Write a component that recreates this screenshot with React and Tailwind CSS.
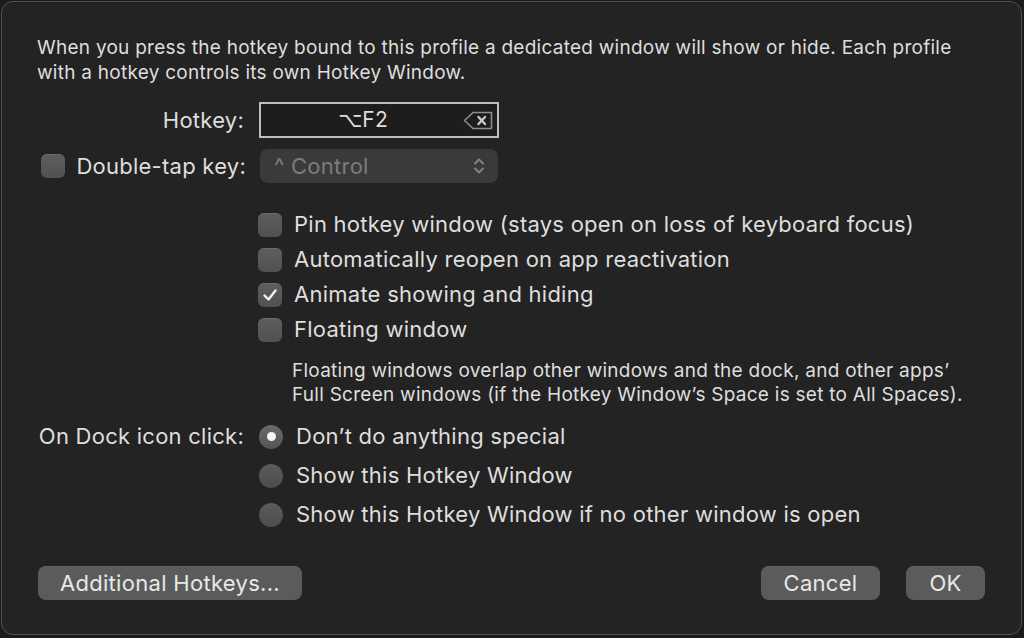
import React from "react";

const FONT = { fontFamily: "Inter, 'Noto Sans', 'DejaVu Sans', sans-serif" };

function Checkbox({ checked }) {
  return (
    <div className="w-[24px] h-[24px] rounded-[6px] bg-gradient-to-b from-[#5e5e5e] to-[#515151] shadow-[inset_0_0.5px_0_rgba(255,255,255,0.15)] flex items-center justify-center shrink-0">
      {checked && (
        <svg width="18" height="18" viewBox="0 0 18 18">
          <path d="M3.5 9.5 L7.5 13.5 L14.5 4.5" fill="none" stroke="#f2f2f2" strokeWidth="2.4" strokeLinecap="round" strokeLinejoin="round" />
        </svg>
      )}
    </div>
  );
}

function Radio({ selected }) {
  return (
    <div className={"w-[24px] h-[24px] rounded-full flex items-center justify-center shrink-0 " + (selected ? "bg-gradient-to-b from-[#6a6a6a] to-[#555555]" : "bg-gradient-to-b from-[#5c5c5c] to-[#4c4c4c]")}>
      {selected && <div className="w-[9px] h-[9px] rounded-full bg-[#f5f5f5]" />}
    </div>
  );
}

function Btn({ children, w }) {
  return (
    <div className={"h-[34px] rounded-[8px] bg-[#5b5b5b] shadow-[inset_0_0.5px_0_rgba(255,255,255,0.12)] flex items-center justify-center text-[22px] tracking-[0.3px] text-[#e8e8e8] " + w}>
      {children}
    </div>
  );
}

export default function App() {
  return (
    <div className="w-[1024px] h-[638px] bg-[#1b1b1b] pl-px pt-px" style={FONT}>
      <div className="w-[1021px] h-[634px] rounded-[12px] border border-[#505050] bg-[#242323] flex flex-col pl-[35px] pr-[36px] pt-[33px] pb-[34px] text-[#dedede]">
        <div className="text-[19px] leading-[25px] tracking-[0.26px]">
          When you press the hotkey bound to this profile a dedicated window will show or hide. Each profile
          <br />
          with a hotkey controls its own Hotkey Window.
        </div>

        {/* Hotkey row */}
        <div className="flex items-center mt-[17px] text-[22px] tracking-[0.25px]">
          <div className="w-[207px] text-right">Hotkey:</div>
          <div className="ml-[15px] w-[240px] h-[36px] border-2 border-[#bdbdbd] bg-[#1d1d1d] relative flex items-center">
            <div className="w-[204px] text-center text-[21px]" style={{ fontFamily: "'DejaVu Sans', Inter, sans-serif" }}>
              <span>⌥</span><span style={FONT}>F2</span>
            </div>
            <svg className="absolute right-[4px] top-[7px]" width="30" height="19" viewBox="0 0 30 19">
              <path d="M10 1.5 H28.5 V17.5 H10 L1.5 9.5 Z" fill="none" stroke="#8e8e8e" strokeWidth="1.6" strokeLinejoin="round" />
              <path d="M15.5 6 L22 13 M22 6 L15.5 13" stroke="#c8c8c8" strokeWidth="2.4" strokeLinecap="round" />
            </svg>
          </div>
        </div>

        {/* Double tap row */}
        <div className="flex items-center mt-[11px] text-[22px] tracking-[0.25px]">
          <div className="w-[209px] flex items-center">
            <div className="ml-[4px]"><Checkbox /></div>
            <div className="ml-auto">Double-tap key:</div>
          </div>
          <div className="ml-[14px] w-[238px] h-[34px] rounded-[8px] bg-[#3a3a3a] flex items-center pl-[14px] pr-[12px] text-[#7c7c7c]">
            <span>^ Control</span>
            <svg className="ml-auto" width="14" height="22" viewBox="0 0 14 22">
              <path d="M3 8.5 L7 4.5 L11 8.5" fill="none" stroke="#808080" strokeWidth="2" strokeLinecap="round" strokeLinejoin="round" />
              <path d="M3 13.5 L7 17.5 L11 13.5" fill="none" stroke="#808080" strokeWidth="2" strokeLinecap="round" strokeLinejoin="round" />
            </svg>
          </div>
        </div>

        {/* Checkboxes */}
        <div className="flex flex-col mt-[24px] ml-[221px] text-[22px] tracking-[0.25px]">
          {[
            ["Pin hotkey window (stays open on loss of keyboard focus)", false],
            ["Automatically reopen on app reactivation", false],
            ["Animate showing and hiding", true],
            ["Floating window", false],
          ].map(([t, c]) => (
            <div key={t} className="h-[35px] flex items-center">
              <Checkbox checked={c} />
              <span className="ml-[12px]">{t}</span>
            </div>
          ))}
        </div>

        <div className="ml-[255px] mt-[12px] text-[19px] leading-[24px] tracking-[0.26px]">
          Floating windows overlap other windows and the dock, and other apps’
          <br />
          Full Screen windows (if the Hotkey Window’s Space is set to All Spaces).
        </div>

        {/* Dock row */}
        <div className="flex mt-[10px] text-[22px] tracking-[0.25px]">
          <div className="w-[207px] h-[39px] flex items-center justify-end">On Dock icon click:</div>
          <div className="ml-[15px] flex flex-col">
            {[
              ["Don’t do anything special", true],
              ["Show this Hotkey Window", false],
              ["Show this Hotkey Window if no other window is open", false],
            ].map(([t, s]) => (
              <div key={t} className="h-[39px] flex items-center">
                <Radio selected={s} />
                <span className="ml-[13px]">{t}</span>
              </div>
            ))}
          </div>
        </div>

        {/* Buttons */}
        <div className="mt-auto flex items-center">
          <div className="ml-px">
            <Btn w="w-[264px]">Additional Hotkeys...</Btn>
          </div>
          <div className="ml-auto flex gap-[26px]">
            <Btn w="w-[119px]">Cancel</Btn>
            <Btn w="w-[79px]">OK</Btn>
          </div>
        </div>
      </div>
    </div>
  );
}
